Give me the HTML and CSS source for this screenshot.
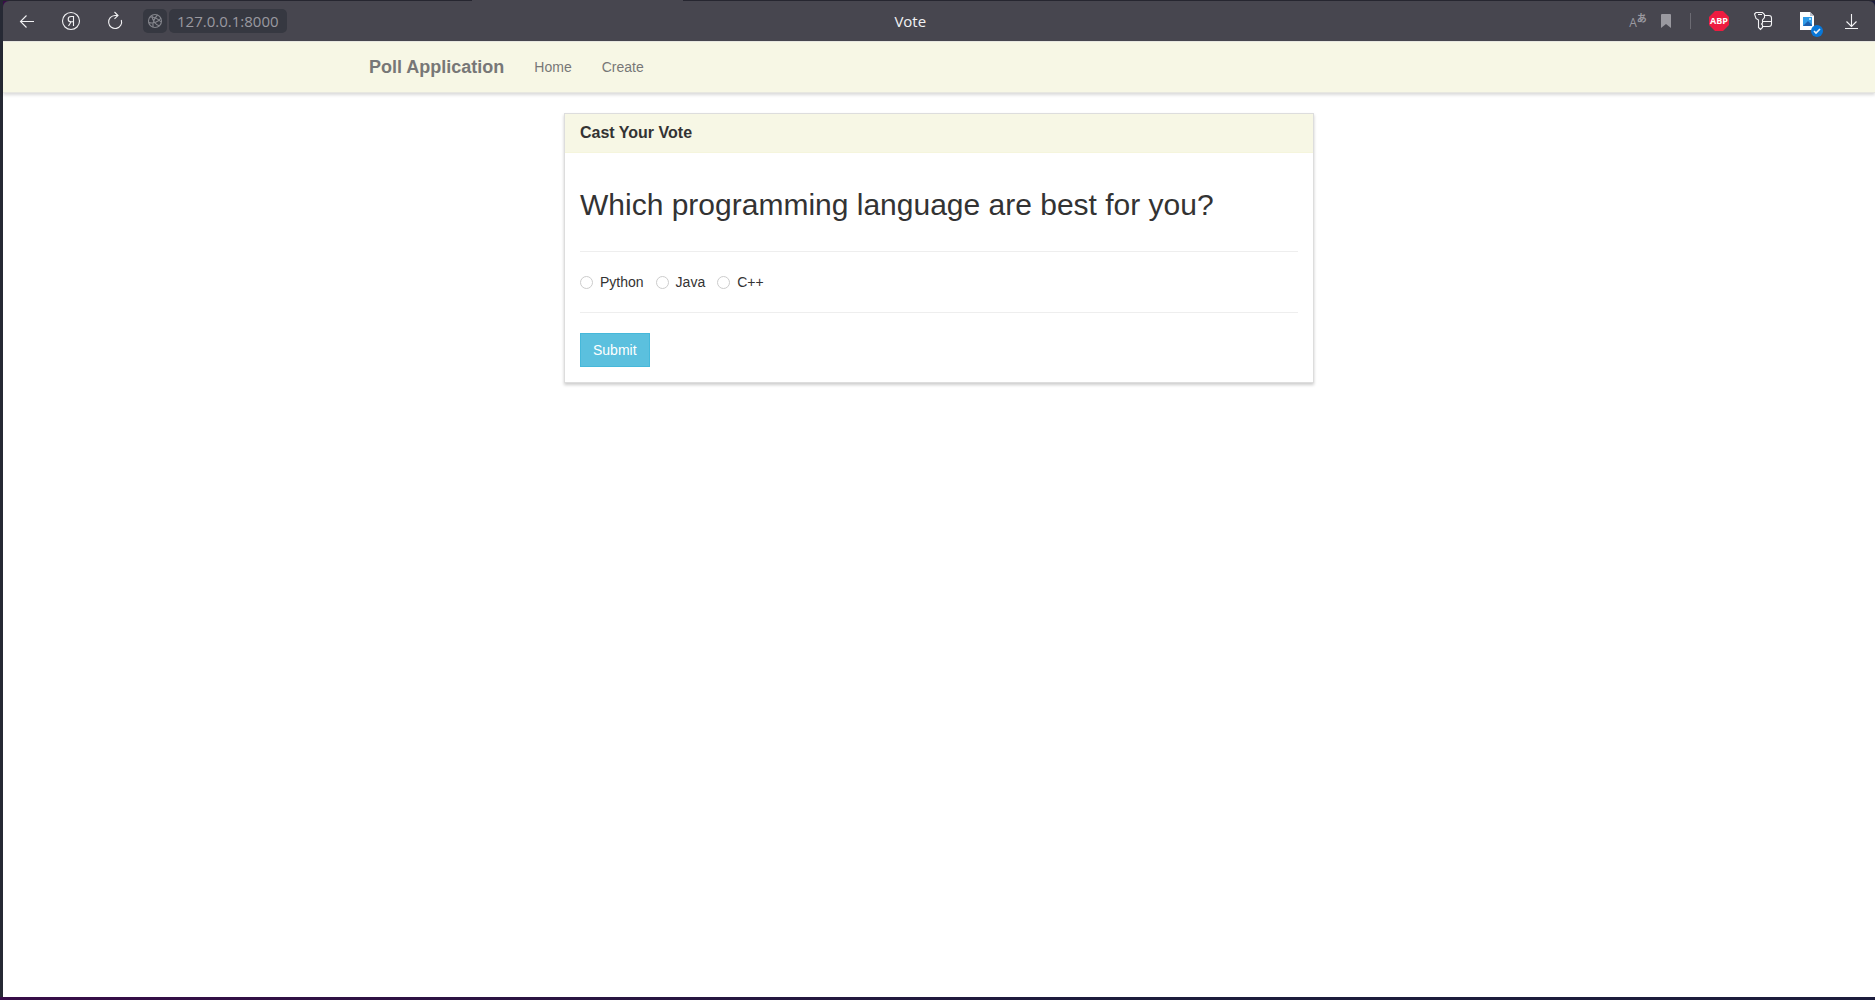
FILE: index.html
```html
<!DOCTYPE html>
<html lang="en">
<head>
<meta charset="utf-8">
<title>Vote</title>
<link rel="stylesheet" href="styles.css">
</head>
<body>
<div class="window">
  <div class="window-edge"><div class="window-tab"></div></div>
  <header class="toolbar">
    <div class="toolbar-group toolbar-nav">
      <button class="tool" type="button" aria-label="Back">
        <svg viewBox="0 0 24 24"><path d="M19 12.500H5.500M11.500 6.500l-6 6 6 6"/></svg>
      </button>
      <button class="tool" type="button" aria-label="Home page">
        <svg viewBox="0 0 24 24"><circle cx="12" cy="12" r="8.500"/><path d="M14.500 7v10M14.500 7.500h-2.300c-4 0-4 5.300 0 5.300h2.300M12 13l-2.500 4"/></svg>
      </button>
      <button class="tool" type="button" aria-label="Reload">
        <svg viewBox="0 0 24 24"><path d="M18.300 11A6.500 6.500 0 1 1 12 6.500h3M11.500 3l3.500 3.500-3.500 3.300"/></svg>
      </button>
    </div>
    <div class="toolbar-group toolbar-address">
      <button class="site-info" type="button" aria-label="Site information">
        <svg viewBox="0 0 24 24"><circle cx="12" cy="12" r="6.500"/><path d="M9 6.500c0 4 3 9 7.500 10.500M14.500 6c-3 3-5 7-4.500 12M5.500 13.500c5 1.500 10-.5 12.500-4.500M7 8c4 0 8 1.500 11 5"/></svg>
      </button>
      <button class="address" type="button">127.0.0.1:8000</button>
    </div>
    <div class="toolbar-title">Vote</div>
    <div class="toolbar-group toolbar-page">
      <button class="tool tool-muted tool-translate" type="button" aria-label="Translate"><span>A</span><span class="kana">あ</span></button>
      <button class="tool tool-muted" type="button" aria-label="Bookmark">
        <svg viewBox="0 0 24 24"><path class="fill" d="M8 5h8q1 0 1 1v13l-5-4-5 4V6q0-1 1-1z"/></svg>
      </button>
    </div>
    <div class="toolbar-divider"></div>
    <div class="toolbar-group toolbar-extensions">
      <button class="tool tool-abp" type="button">ABP</button>
      <button class="tool" type="button" aria-label="Passwords">
        <svg viewBox="0 0 24 24"><path d="M5 3.500h6.500l2 2v3L11.500 11v3l-1 1 1 1v2.500l-2 2-2-2V11L5 9.500 3.500 5zM7 5.500h4M13.500 6.500h4.500q2.500 0 2.500 2.500v6q0 2.500-2.500 2.500h-6.500M12 12.500h8.500"/></svg>
      </button>
      <button class="tool" type="button" aria-label="Image viewer">
        <svg viewBox="0 0 24 24"><path fill="#fff" stroke="none" d="M5 3h10l4 4v14H5z"/><path fill="#b9bec8" stroke="none" d="M15 3v4h4z"/><path fill="#2f9be8" stroke="none" d="M8 8h9v9H8z"/><path fill="#1d5fae" stroke="none" d="M8 17l5-5 4 4v1z"/><path fill="#a6e0ff" stroke="none" d="M14 9h2v2h-2z"/><circle cx="22" cy="22" r="6" fill="#0877d8" stroke="none"/><path stroke-width="1.600" d="M19 22l2 2 4-4"/></svg>
      </button>
      <button class="tool" type="button" aria-label="Downloads">
        <svg viewBox="0 0 24 24"><path d="M12.500 5v12.500M7.500 12.500l5 5 5-5M6 19.500h13"/></svg>
      </button>
    </div>
  </header>

  <div class="page">
    <nav class="navbar">
      <div class="container navbar-content">
        <a class="navbar-brand" href="#">Poll Application</a>
        <a class="navbar-link" href="#">Home</a>
        <a class="navbar-link" href="#">Create</a>
      </div>
    </nav>
    <main class="container">
      <section class="panel">
        <h1 class="panel-title">Cast Your Vote</h1>
        <form class="panel-body">
          <h2 class="question">Which programming language are best for you?</h2>
          <hr class="rule">
          <div class="choices">
            <label class="choice"><input class="radio" type="radio" name="choice" value="python">Python</label>
            <label class="choice"><input class="radio" type="radio" name="choice" value="java">Java</label>
            <label class="choice"><input class="radio" type="radio" name="choice" value="cpp">C++</label>
          </div>
          <hr class="rule">
          <button class="submit" type="submit">Submit</button>
        </form>
      </section>
    </main>
  </div>
</div>
</body>
</html>
```
FILE: styles.css
```css
* { box-sizing: border-box; }

body {
  margin: 0;
  color: #333;
  font-family: "Liberation Sans", Arial, sans-serif;
  font-size: 14px;
  line-height: 20px;
}

button {
  border: 0;
  padding: 0;
  background: none;
  font: inherit;
}

a { text-decoration: none; }

/* Browser window */
.window {
  display: flex;
  flex-direction: column;
  min-height: 100vh;
  padding: 0 0 3px 3px;
  background: linear-gradient(#262934, #262934) top left / 3px calc(100% - 3px) no-repeat,
    linear-gradient(to right, #380d48, #1c1c3c 60%, #1c1c3c);
}

.window-edge {
  height: 1px;
  background: #262630;
}

.window-tab {
  width: 211px;
  height: 1px;
  margin-left: 469px;
  background: #47464f;
}

.toolbar {
  display: flex;
  align-items: center;
  height: 40px;
  padding: 0 12px;
  border-radius: 6px 6px 0 0;
  background: #47464f;
  font-family: "Open Sans", "Noto Sans", sans-serif;
  font-size: 15px;
}

.toolbar-group { display: flex; }
.toolbar-nav { gap: 20px; }
.toolbar-address { gap: 2px; margin-left: 16px; }
.toolbar-page { gap: 4px; }
.toolbar-extensions { gap: 20px; }

.toolbar-title {
  flex: 1;
  padding-right: 92px;
  color: #f2f2f4;
  text-align: center;
}

.toolbar-divider {
  width: 1px;
  height: 16px;
  margin: 0 16px 0 12px;
  background: #6c6b73;
}

.tool {
  width: 24px;
  height: 24px;
  color: #f2f2f4;
}

.tool-muted { color: #9a99a0; }

.tool svg,
.site-info svg {
  display: block;
  width: 24px;
  height: 24px;
  overflow: visible;
  fill: none;
  stroke: currentColor;
  stroke-width: 1.1;
}

.tool svg .fill { fill: currentColor; stroke: none; }

.tool-translate {
  display: flex;
  align-items: flex-end;
  justify-content: center;
  font-size: 12px;
  line-height: 20px;
}

.kana {
  align-self: flex-start;
  font-family: "Noto Sans CJK JP", sans-serif;
  font-size: 10px;
  font-weight: 700;
  line-height: 18px;
}

.tool-abp {
  width: 20px;
  height: 20px;
  margin: 2px;
  background: #ee1c40;
  clip-path: polygon(30% 0, 70% 0, 100% 30%, 100% 70%, 70% 100%, 30% 100%, 0 70%, 0 30%);
  color: #fff;
  font-size: 9px;
  font-weight: 700;
  line-height: 20px;
}

.site-info,
.address {
  height: 24px;
  border-radius: 5px;
  background: #363841;
  color: #9a99a0;
}

.site-info { width: 24px; color: #85868d; }
.address { padding: 0 8px; }

/* Page */
.page {
  flex: 1;
  background: #fff;
}

.container {
  max-width: 1170px;
  margin: 0 auto;
  padding: 0 15px;
}

.navbar {
  margin-bottom: 20px;
  border: solid #e7e7e0;
  border-width: 1px 0;
  background: #f7f7e5;
  box-shadow: 0 2px 3px rgba(0, 0, 0, 0.15);
}

.navbar-content {
  display: flex;
  gap: 30px;
  padding: 15px;
}

.navbar-brand,
.navbar-link { color: #777; }

.navbar-brand {
  font-size: 18px;
  font-weight: 700;
}

.panel {
  max-width: 750px;
  margin: 0 auto;
  border: 1px solid #ddd;
  background: #fff;
  box-shadow: 0 2px 3px rgba(0, 0, 0, 0.2);
}

.panel-title {
  margin: 0;
  padding: 10px 15px;
  border-bottom: 1px solid #f5f5dc;
  background: #f7f7e5;
  font-size: 16px;
  line-height: 18px;
}

.panel-body { padding: 15px; }

.question {
  margin: 20px 0 30px;
  font-size: 30px;
  font-weight: 400;
  line-height: 33px;
}

.rule {
  margin: 20px 0;
  border: 0;
  border-top: 1px solid #eee;
}

.choices {
  display: flex;
  gap: 12px;
}

.choice {
  display: flex;
  align-items: center;
  gap: 7px;
}

.radio {
  appearance: none;
  width: 13px;
  height: 13px;
  margin: 0;
  border: 1px solid #ccc;
  border-radius: 50%;
}

.radio:checked { border: 4px solid #5bc0de; }

.submit {
  display: block;
  padding: 6px 12px;
  border: 1px solid #46b8da;
  background: #5bc0de;
  color: #fff;
}
```
